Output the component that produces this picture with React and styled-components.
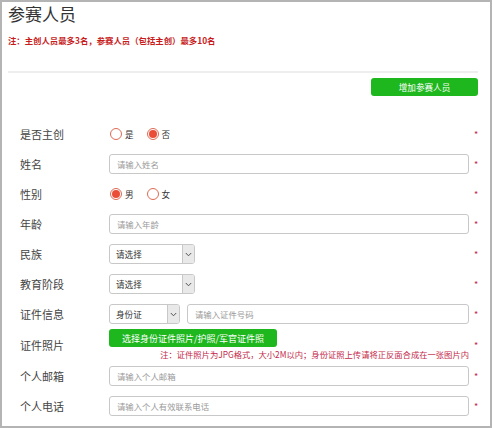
import React from "react";
import styled, { createGlobalStyle } from "styled-components";

const GlobalStyle = createGlobalStyle`
  html, body {
    margin: 0;
    padding: 0;
    background: #fff;
  }
  body {
    font-family: "Noto Sans CJK SC", "Noto Sans", sans-serif;
  }
  * {
    box-sizing: border-box;
  }
`;

const Frame = styled.div`
  width: 492px;
  height: 428px;
  border: 2px solid #b4b4b4;
  padding: 0 12px 0 6px;
  background: #fff;
  overflow: hidden;
`;

const Title = styled.h2`
  margin: 0;
  font-size: 17px;
  line-height: 24px;
  font-weight: 400;
  color: #333;
`;

const Notice = styled.p`
  margin: 7px 0 0;
  font-size: 8.4px;
  line-height: 14px;
  font-weight: 700;
  color: #c81c1c;
`;

const Divider = styled.div`
  margin-top: 24px;
  height: 2px;
  background: #eeeeee;
`;

const Toolbar = styled.div`
  display: flex;
  justify-content: flex-end;
  margin-top: 5px;
`;

const GreenButton = styled.button`
  display: flex;
  align-items: center;
  justify-content: center;
  width: ${(p) => p.width}px;
  height: 18px;
  padding: 0;
  border: none;
  border-radius: 3px;
  background: #1eb71e;
  color: #fff;
  font-family: inherit;
  font-size: ${(p) => p.size || 8.6}px;
  cursor: pointer;
`;

const Form = styled.div`
  margin-top: 23px;
`;

const Row = styled.div`
  display: grid;
  grid-template-columns: 101px 360px 1fr;
  align-items: center;
  height: ${(p) => (p.tall ? 32 : 30)}px;
`;

const Label = styled.div`
  padding-left: 12px;
  font-size: 11px;
  line-height: 16px;
  color: #444;
`;

const Control = styled.div`
  display: flex;
  flex-direction: ${(p) => (p.column ? "column" : "row")};
  align-items: ${(p) => (p.column ? "stretch" : "center")};
  gap: ${(p) => p.gap || 0}px;
`;

const Required = styled.span`
  padding-left: 5px;
  font-size: 9px;
  color: #c3284a;
  line-height: 1;
`;

const Input = styled.input`
  flex: 1;
  min-width: 0;
  height: 20px;
  padding: 0 7px;
  border: 1px solid #c8c8c8;
  border-radius: 3px;
  font-family: inherit;
  font-size: 8.4px;
  color: #333;
  outline: none;
  &::placeholder {
    color: #9a9a9a;
  }
`;

const Radios = styled.div`
  display: flex;
  align-items: center;
  gap: 13px;
  padding-left: 1px;
`;

const RadioItem = styled.label`
  display: flex;
  align-items: center;
  gap: 3px;
  font-size: 8.6px;
  color: #333;
`;

const Circle = styled.span`
  width: 12px;
  height: 12px;
  border-radius: 50%;
  border: 1px solid #de6a55;
  display: flex;
  align-items: center;
  justify-content: center;
  &::after {
    content: "";
    width: 8px;
    height: 8px;
    border-radius: 50%;
    background: ${(p) => (p.checked ? "#ea4e38" : "transparent")};
  }
`;

const SelectBox = styled.div`
  display: flex;
  width: ${(p) => p.width}px;
  height: 20px;
  border: 1px solid #c8c8c8;
  border-radius: 3px;
  overflow: hidden;
  flex: none;
`;

const SelectText = styled.div`
  flex: 1;
  display: flex;
  align-items: center;
  padding-left: 6px;
  font-size: 8.6px;
  color: #333;
`;

const Arrow = styled.div`
  width: 12px;
  display: flex;
  align-items: center;
  justify-content: center;
  background: #e9e9e9;
  border-left: 1px solid #c8c8c8;
`;

const PhotoHint = styled.div`
  text-align: right;
  font-size: 8.3px;
  line-height: 14px;
  color: #c3284a;
  white-space: nowrap;
`;

const Chevron = () => (
  <svg width="7" height="5" viewBox="0 0 7 5">
    <path d="M0.8 1 L3.5 3.8 L6.2 1" fill="none" stroke="#555" strokeWidth="1" />
  </svg>
);

const Select = ({ width, text }) => (
  <SelectBox width={width}>
    <SelectText>{text}</SelectText>
    <Arrow>
      <Chevron />
    </Arrow>
  </SelectBox>
);

const Radio = ({ checked, children }) => (
  <RadioItem>
    <Circle checked={checked} />
    {children}
  </RadioItem>
);

const Field = ({ label, children, tall, column, gap }) => (
  <Row tall={tall}>
    <Label>{label}</Label>
    <Control column={column} gap={gap}>
      {children}
    </Control>
    <Required>*</Required>
  </Row>
);

export default function App() {
  return (
    <>
      <GlobalStyle />
      <Frame>
        <Title>参赛人员</Title>
        <Notice>注：主创人员最多3名，参赛人员（包括主创）最多10名</Notice>
        <Divider />
        <Toolbar>
          <GreenButton width={107}>增加参赛人员</GreenButton>
        </Toolbar>
        <Form>
          <Field label="是否主创">
            <Radios>
              <Radio>是</Radio>
              <Radio checked>否</Radio>
            </Radios>
          </Field>
          <Field label="姓名">
            <Input placeholder="请输入姓名" />
          </Field>
          <Field label="性别">
            <Radios>
              <Radio checked>男</Radio>
              <Radio>女</Radio>
            </Radios>
          </Field>
          <Field label="年龄">
            <Input placeholder="请输入年龄" />
          </Field>
          <Field label="民族">
            <Select width={86} text="请选择" />
          </Field>
          <Field label="教育阶段">
            <Select width={86} text="请选择" />
          </Field>
          <Field label="证件信息" gap={7}>
            <Select width={71} text="身份证" />
            <Input placeholder="请输入证件号码" />
          </Field>
          <Field label="证件照片" tall column>
            <GreenButton width={168} size={9}>
              选择身份证件照片/护照/军官证件照
            </GreenButton>
            <PhotoHint>
              注：证件照片为JPG格式，大小2M以内；身份证照上传请将正反面合成在一张图片内
            </PhotoHint>
          </Field>
          <Field label="个人邮箱">
            <Input placeholder="请输入个人邮箱" />
          </Field>
          <Field label="个人电话">
            <Input placeholder="请输入个人有效联系电话" />
          </Field>
        </Form>
      </Frame>
    </>
  );
}
